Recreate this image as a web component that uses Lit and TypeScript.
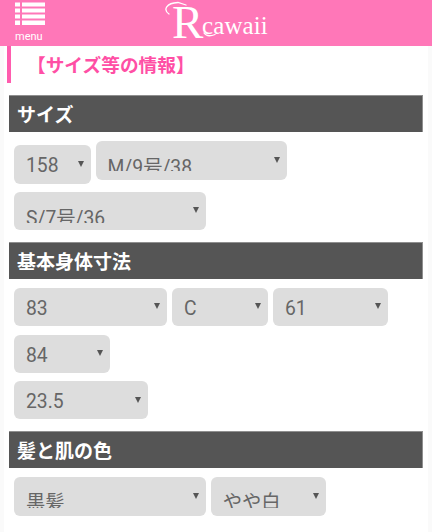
import { LitElement, html, css } from "lit";
import { customElement } from "lit/decorators.js";

type Field = { v: string; w: number; kind?: string };

const sections: { title: string; rows: Field[][] }[] = [
  {
    title: "サイズ",
    rows: [
      [
        { v: "158", w: 76.5, kind: "low" },
        { v: "M/9号/38", w: 191.7, kind: "cut-a" },
      ],
      [{ v: "S/7号/36", w: 191.7, kind: "cut-b" }],
    ],
  },
  {
    title: "基本身体寸法",
    rows: [
      [
        { v: "83", w: 153 },
        { v: "C", w: 96 },
        { v: "61", w: 115 },
      ],
      [{ v: "84", w: 96 }],
      [{ v: "23.5", w: 134 }],
    ],
  },
  {
    title: "髪と肌の色",
    rows: [
      [
        { v: "黒髪", w: 191.7, kind: "cut-c" },
        { v: "やや白", w: 115, kind: "cut-c" },
      ],
    ],
  },
];

@customElement("app-root")
export class AppRoot extends LitElement {
  static styles = css`
    :host {
      display: block;
      width: 432px;
      height: 532px;
      overflow: hidden;
      background: #fafafa;
      font-family: Roboto, "Noto Sans CJK JP", sans-serif;
    }
    .header {
      height: 46px;
      background: #ff77b8;
      display: flex;
      position: relative;
    }
    .menu {
      width: 60px;
      padding: 2px 0 0 15px;
      box-sizing: border-box;
      color: #fff;
      font-size: 11px;
      line-height: 13px;
    }
    .menu svg { display: block; width: 30px; height: 24px; margin-bottom: 4px; }
    .logo {
      position: relative;
      margin-left: 112px;
      width: 110px;
      height: 46px;
      color: #fff;
      font-family: "Liberation Serif", serif;
      white-space: nowrap;
      display: flex;
      align-items: baseline;
      line-height: 44px;
    }
    .logo-r { font-size: 47px; width: 30px; }
    .logo-rest { font-size: 25px; letter-spacing: 0.1px; position: relative; top: -4px; }
    .swash { position: absolute; left: -8px; top: 0; width: 60px; height: 46px; }
    .main {
      margin: 0 4px;
      padding: 0 5px;
      height: 486px;
      background: #fff;
    }
    .title {
      margin: 0 0 12px -2px;
      height: 37px;
      border-left: 4px solid #ff5cae;
      padding-left: 16px;
      color: #ff4fa5;
      font-size: 18.7px;
      font-weight: 700;
      line-height: 36px;
      font-family: "Noto Sans CJK JP", sans-serif;
    }
    h2 {
      margin: 0;
      width: 414px;
      box-sizing: border-box;
      height: 37px;
      background: #555;
      border: 1px solid #8f8f8f;
      border-width: 1px 1px 0 0;
      color: #fff;
      font-size: 19px;
      line-height: 35px;
      font-weight: 700;
      padding-left: 8px;
      font-family: "Noto Sans CJK JP", sans-serif;
    }
    .fields {
      display: flex;
      flex-direction: column;
      gap: 8.3px;
      padding: 9.3px 5px 11.5px;
    }
    .row { display: flex; gap: 5px; align-items: flex-start; }
    .select {
      position: relative;
      height: 38.3px;
      box-sizing: border-box;
      padding: 0 12px;
      border-radius: 6px;
      background: #ddd;
      color: #666;
      font-size: 19.3px;
      line-height: 23px;
    }
    .select.low { margin-top: 4px; }
    .value { display: block; height: 34px; padding-top: 9px; box-sizing: border-box; overflow: hidden; white-space: nowrap; }
    .cut-a .value { padding-top: 14.5px; height: 30px; }
    .cut-b .value { padding-top: 15.5px; height: 31px; }
    .cut-c .value { padding-top: 14px; height: 31px; }
    .select::after {
      content: "";
      position: absolute;
      right: 7px;
      top: 15.5px;
      border-style: solid;
      border-width: 6.5px 3.7px 0;
      border-color: #555 transparent transparent;
    }
  `;

  render() {
    return html`
      <div class="header">
        <div class="menu">
          <svg viewBox="0 0 30 24" fill="#fff">
            <rect x="0" y="0.5" width="5" height="4" /><rect x="7" y="0.5" width="23" height="4" />
            <rect x="0" y="6.5" width="5" height="4" /><rect x="7" y="6.5" width="23" height="4" />
            <rect x="0" y="12.5" width="5" height="4" /><rect x="7" y="12.5" width="23" height="4" />
            <rect x="0" y="18.5" width="5" height="4.5" /><rect x="7" y="18.5" width="23" height="4.5" />
          </svg>
          menu
        </div>
        <div class="logo">
          <svg class="swash" viewBox="0 0 60 46" fill="none" stroke="#fff" stroke-width="1.3" stroke-linecap="round">
            <path d="M5 14C-1 10 2 3 14 2.500L22 5" />
            <path d="M40 33C42 36 46 36.500 51 34.500" />
          </svg>
          <span class="logo-r">R</span><span class="logo-rest">cawaii</span>
        </div>
      </div>
      <div class="main">
        <div class="title">【サイズ等の情報】</div>
        ${sections.map(
          (s) => html`
            <h2>${s.title}</h2>
            <div class="fields">
              ${s.rows.map(
                (r) => html`<div class="row">
                  ${r.map(
                    (f) => html`<div class="select ${f.kind ?? ""}" role="combobox" style="width:${f.w}px">
                      <span class="value">${f.v}</span>
                    </div>`
                  )}
                </div>`
              )}
            </div>
          `
        )}
      </div>
    `;
  }
}
